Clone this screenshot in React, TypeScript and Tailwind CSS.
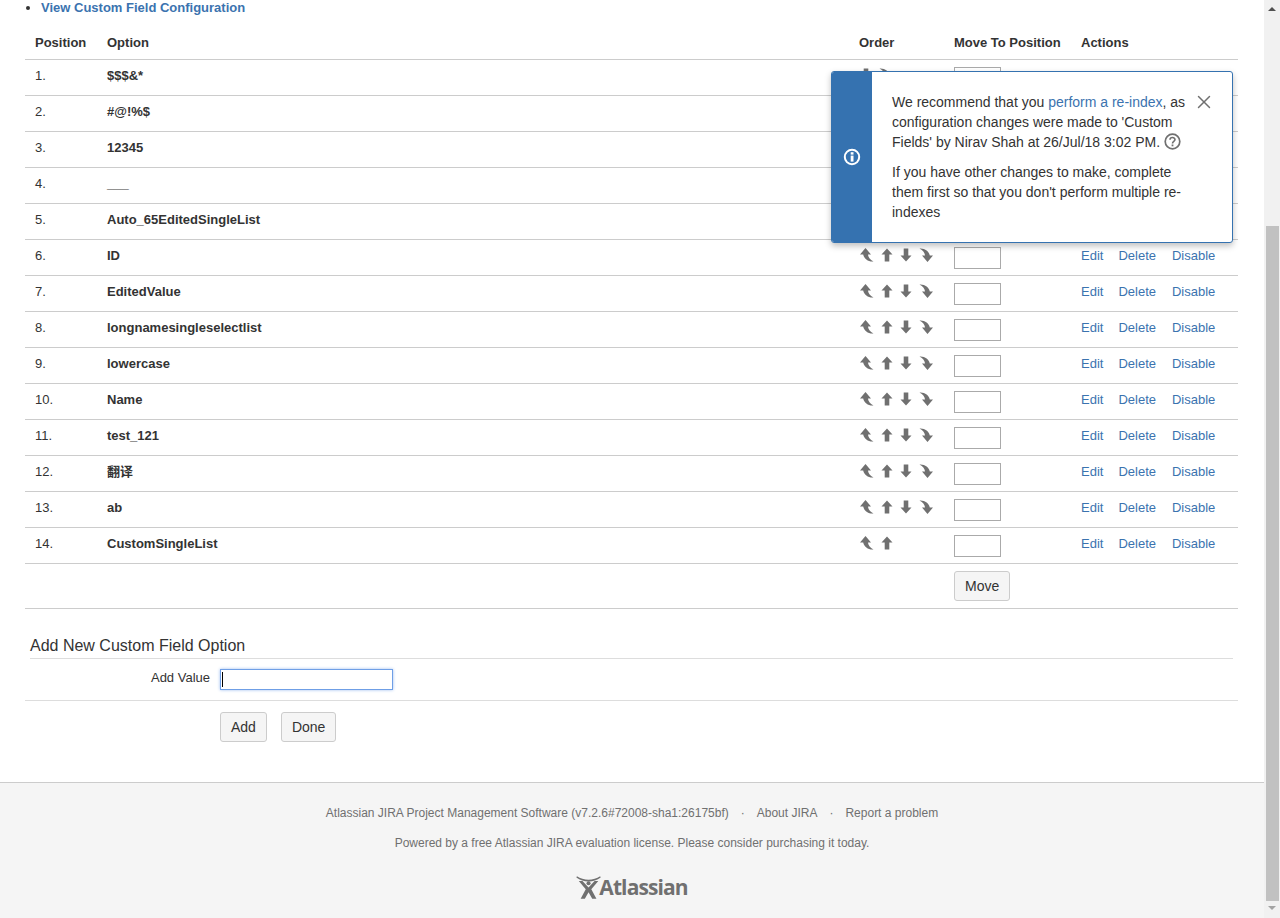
import React from "react";
import { X } from "lucide-react";

const rows = [
  "$$$&*",
  "#@!%$",
  "12345",
  "___",
  "Auto_65EditedSingleList",
  "ID",
  "EditedValue",
  "longnamesingleselectlist",
  "lowercase",
  "Name",
  "test_121",
  "翻译",
  "ab",
  "CustomSingleList",
];

const FIRST = "M1 7.5 L6.5 1 L12 7.5 H9 C9 10 11 12.5 14.5 14.5 C9.5 15 5 12 4.2 7.5 Z";
const UP = "M2.5 7.5 L8 1.5 L13.5 7.5 H10.3 V14.5 H5.7 V7.5 Z";

function Arrow({ d, flip }: { d: string; flip?: boolean }) {
  return (
    <span className="block w-5 h-4 shrink-0">
      <svg width="16" height="16" viewBox="0 0 16 16" className={flip ? "rotate-180 -translate-x-[1px] fill-[#707070]" : "fill-[#707070]"}>
        <path d={d} />
      </svg>
    </span>
  );
}

function OrderIcons({ i }: { i: number }) {
  const last = i === rows.length - 1;
  return (
    <div className="flex pt-[2px]">
      {i > 0 && <Arrow d={FIRST} />}
      {i > 0 && <Arrow d={UP} />}
      {!last && <Arrow d={UP} flip />}
      {!last && <Arrow d={FIRST} flip />}
    </div>
  );
}

function Btn({ children }: { children: React.ReactNode }) {
  return (
    <button className="h-[30px] px-[10px] bg-[#f5f5f5] border border-[#ccc] rounded-[3px] text-[14px] text-[#333] leading-5">
      {children}
    </button>
  );
}

export default function App() {
  return (
    <div className="relative flex w-[1280px] h-[918px] overflow-hidden bg-white text-[13px] leading-5 text-[#333] font-['Liberation_Sans','Noto_Sans_CJK_SC',sans-serif]">
      <div className="flex flex-col flex-1 min-w-0">
        <div className="-mt-[2px] pl-[25px] pr-[26px]">
          <ul className="list-disc pl-4">
            <li>
              <a className="font-bold text-[#3b73af]">View Custom Field Configuration</a>
            </li>
          </ul>
          <table className="mt-[7px] w-[1213px] table-fixed border-collapse">
            <colgroup>
              <col className="w-[72px]" />
              <col className="w-[752px]" />
              <col className="w-[95px]" />
              <col className="w-[127px]" />
              <col className="w-[167px]" />
            </colgroup>
            <thead>
              <tr className="h-[34px] border-b border-[#ccc] text-left align-top">
                <th className="px-[10px] pt-[8px] font-bold">Position</th>
                <th className="px-[10px] pt-[8px] font-bold">Option</th>
                <th className="px-[10px] pt-[8px] font-bold">Order</th>
                <th className="px-[10px] pt-[8px] font-bold whitespace-nowrap">Move To Position</th>
                <th className="px-[10px] pt-[8px] font-bold">Actions</th>
              </tr>
            </thead>
            <tbody>
              {rows.map((name, i) => (
                <tr key={i} className="h-[36px] border-b border-[#ccc] align-top">
                  <td className="px-[10px] pt-[6px]">{i + 1}.</td>
                  <td className="px-[10px] pt-[6px] font-bold">{name}</td>
                  <td className="px-[10px] pt-[5px]">
                    <OrderIcons i={i} />
                  </td>
                  <td className="px-[10px] pt-[7px]">
                    <div className="w-[47px] h-[22px] border border-[#aaa] bg-white" />
                  </td>
                  <td className="px-[10px] pt-[6px] text-[#3b73af]">
                    <div className="flex gap-[15px]">
                      <a>Edit</a>
                      <a>Delete</a>
                      <a className="ml-[1px]">Disable</a>
                    </div>
                  </td>
                </tr>
              ))}
              <tr className="h-[45px] border-b border-[#ccc] align-top">
                <td />
                <td />
                <td />
                <td className="px-[10px] pt-[7px]">
                  <Btn>Move</Btn>
                </td>
                <td />
              </tr>
            </tbody>
          </table>
          <div className="mt-[27px] mx-[5px] h-[23px] border-b border-[#ddd] text-[16px] leading-5">
            Add New Custom Field Option
          </div>
          <div className="flex h-[42px] border-b border-[#ddd]">
            <label className="w-[185px] text-right pt-[9px]">Add Value</label>
            <div className="ml-[10px] mt-[10px] w-[173px] h-[21px] flex items-center pl-[1px] border border-[#6f9fe6] shadow-[0_0_3px_#9dbdf0] bg-white">
              <span className="block w-[1px] h-[15px] bg-black" />
            </div>
          </div>
          <div className="flex gap-[14px] pl-[195px] pt-[11px]">
            <Btn>Add</Btn>
            <Btn>Done</Btn>
          </div>
        </div>
        <footer className="mt-auto h-[136px] border-t border-[#ccc] bg-[#f5f5f5] text-[12px] leading-4 text-[#707070] flex flex-col items-center pt-[22px]">
          <div className="flex gap-[12px]">
            <span>Atlassian JIRA Project Management Software (v7.2.6#72008-sha1:26175bf)</span>
            <span>·</span>
            <span>About JIRA</span>
            <span>·</span>
            <span>Report a problem</span>
          </div>
          <div className="mt-[14px]">Powered by a free Atlassian JIRA evaluation license. Please consider purchasing it today.</div>
          <div className="mt-[23px] flex items-end text-[#707070]">
            <svg width="26" height="25" viewBox="0 0 28 26" className="fill-[#707070]">
              <path d="M1 1 C8 6 19 6 26 1 L26.6 2.2 C19 8 8 8 0.4 2.2 Z" />
              <circle cx="13.5" cy="8.5" r="2.2" />
              <path d="M3 6 H7 L13.5 13 L20 6 H24 L16.5 15 L22 25 H17.5 L13.5 18 L9.5 25 H5 L10.5 15 Z" />
            </svg>
            <span className="-ml-[3px] text-[21px] leading-[26px] font-bold tracking-[-0.9px] font-['Open_Sans',sans-serif]">Atlassian</span>
          </div>
        </footer>
      </div>

      <div className="w-4 shrink-0 bg-[#f1f1f1] flex flex-col items-center pt-[7px]">
        <span className="block w-0 h-0 border-x-[4px] border-x-transparent border-b-[4px] border-b-[#505050]" />
        <div className="mt-[215px] w-[13px] h-[675px] bg-[#c1c1c1]" />
        <span className="mt-[5px] block w-0 h-0 border-x-[4px] border-x-transparent border-t-[4px] border-t-[#a3a3a3]" />
      </div>

      <div className="absolute left-[831px] top-[71px] flex w-[402px] h-[172px] bg-white border border-[#3572b0] rounded-[3px] shadow-[0_3px_6px_rgba(0,0,0,0.25)] overflow-hidden text-[14px]">
        <div className="w-[40px] shrink-0 bg-[#3572b0] flex items-center justify-center">
          <svg width="18" height="18" viewBox="0 0 18 18" className="-mt-[1px]">
            <circle cx="9" cy="9" r="7.2" fill="none" stroke="#fff" strokeWidth="2" />
            <rect x="7.7" y="7.6" width="2.8" height="6" fill="#fff" />
            <rect x="7.7" y="4.2" width="2.8" height="2.4" fill="#fff" />
          </svg>
        </div>
        <div className="relative flex-1 pl-[20px] pr-[42px] pt-[20px]">
          <p>
            We recommend that you <a className="text-[#3b73af]">perform a re-index</a>, as configuration changes were made to 'Custom Fields' by Nirav Shah at 26/Jul/18 3:02 PM.{" "}
            <svg width="17" height="17" viewBox="0 0 17 17" className="inline-block align-[-3px]">
              <circle cx="8.5" cy="8.5" r="7.3" fill="none" stroke="#707070" strokeWidth="1.7" />
              <path d="M6 6.7 C6 3.8 11 3.8 11 6.6 C11 8.4 8.5 8.4 8.5 10.4" fill="none" stroke="#707070" strokeWidth="1.6" />
              <rect x="7.6" y="11.5" width="1.8" height="1.8" fill="#707070" />
            </svg>
          </p>
          <p className="mt-[10px]">If you have other changes to make, complete them first so that you don't perform multiple re-indexes</p>
          <X className="absolute right-[17px] top-[19px] text-[#707070]" size={22} strokeWidth={1.6} />
        </div>
      </div>
    </div>
  );
}
